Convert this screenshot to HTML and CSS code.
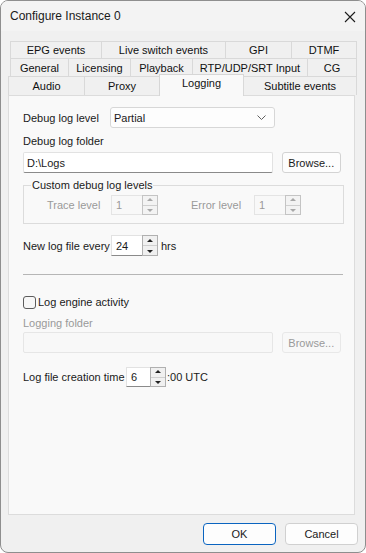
FILE: index.html
```html
<!DOCTYPE html>
<html>
<head>
<meta charset="utf-8">
<link rel="stylesheet" href="styles.css">
</head>
<body>
<div class="window">
  <div class="titlebar">
    <span class="title">Configure Instance 0</span>
    <svg class="close" width="12" height="12" viewBox="0 0 12 12"><path d="M1 1 L11 11 M11 1 L1 11" stroke="#1c1c1c" stroke-width="1.1" fill="none"/></svg>
  </div>
  <div class="tabs">
    <div class="tabrow row1">
      <div class="tab t-epg">EPG events</div>
      <div class="tab t-live">Live switch events</div>
      <div class="tab t-gpi">GPI</div>
      <div class="tab t-dtmf">DTMF</div>
    </div>
    <div class="tabrow row2">
      <div class="tab t-gen">General</div>
      <div class="tab t-lic">Licensing</div>
      <div class="tab t-play">Playback</div>
      <div class="tab t-rtp">RTP/UDP/SRT Input</div>
      <div class="tab t-cg">CG</div>
    </div>
    <div class="tabrow row3">
      <div class="tab t-audio">Audio</div>
      <div class="tab t-proxy">Proxy</div>
      <div class="tab t-log selected">Logging</div>
      <div class="tab t-sub">Subtitle events</div>
    </div>
  </div>
  <div class="panel">
    <div class="row r-level">
      <span class="lbl lbl-level">Debug log level</span>
      <div class="select">
        <span>Partial</span>
        <svg width="9" height="5" viewBox="0 0 9 5"><path d="M0.5 0.5 L4.5 4.5 L8.5 0.5" stroke="#606060" stroke-width="1" fill="none"/></svg>
      </div>
    </div>
    <div class="lbl line l-folder">Debug log folder</div>
    <div class="row r-folder">
      <div class="textbox wide">D:\Logs</div>
      <div class="button">Browse...</div>
    </div>
    <fieldset class="group">
      <legend>Custom debug log levels</legend>
      <div class="grouprow">
        <span class="lbl disabled trace">Trace level</span>
        <div class="spin disabled s-trace"><span class="val">1</span><div class="spinbtns"><div class="sb up"></div><div class="sb down"></div></div></div>
        <span class="lbl disabled errlbl">Error level</span>
        <div class="spin disabled s-err"><span class="val">1</span><div class="spinbtns"><div class="sb up"></div><div class="sb down"></div></div></div>
      </div>
    </fieldset>
    <div class="row r-every">
      <span class="lbl">New log file every</span>
      <div class="spin s-every"><span class="val">24</span><div class="spinbtns"><div class="sb up"></div><div class="sb down"></div></div></div>
      <span class="lbl unit">hrs</span>
    </div>
    <div class="separator"></div>
    <div class="row r-check">
      <span class="checkbox"></span>
      <span class="lbl">Log engine activity</span>
    </div>
    <div class="lbl line disabled l-logging">Logging folder</div>
    <div class="row r-folder2">
      <div class="textbox wide off"></div>
      <div class="button off">Browse...</div>
    </div>
    <div class="row r-time">
      <span class="lbl">Log file creation time</span>
      <div class="spin s-time"><span class="val">6</span><div class="spinbtns"><div class="sb up"></div><div class="sb down"></div></div></div>
      <span class="lbl utc">:00 UTC</span>
    </div>
  </div>
  <div class="footer">
    <div class="dlgbtn ok">OK</div>
    <div class="dlgbtn">Cancel</div>
  </div>
</div>
</body>
</html>
```
FILE: styles.css
```css
* { box-sizing: border-box; }
html, body { margin: 0; padding: 0; background: #ffffff; }
body {
  font-family: "Liberation Sans", Arial, sans-serif;
  font-size: 11px;
  color: #1a1a1a;
}
.window {
  width: 366px;
  height: 553px;
  border: 1px solid #8e8e8e;
  border-radius: 8px;
  background: #f0f0f0;
  display: flex;
  flex-direction: column;
  overflow: hidden;
}
.titlebar {
  height: 30px;
  flex: none;
  background: #f3f3f3;
  display: flex;
  align-items: center;
  justify-content: space-between;
  padding: 0 9px 0 9px;
}
.title { font-size: 12px; color: #1a1a1a; }
.close { margin-top: 1px; }

.tabs {
  padding-top: 10px;
  display: flex;
  flex-direction: column;
  position: relative;
  z-index: 1;
}
.tabrow { display: flex; }
.row1 { margin-left: 9px; height: 17px; }
.row2 { margin-left: 9px; height: 18px; }
.row3 { margin-left: 7px; height: 19px; }
.tab {
  border: 1px solid #d9d9d9;
  border-bottom: none;
  margin-left: -1px;
  background: #f0f0f0;
  display: flex;
  align-items: center;
  justify-content: center;
  white-space: nowrap;
  color: #111;
}
.tabrow .tab:first-child { margin-left: 0; }
.t-epg { width: 92px; }
.t-live { width: 125px; }
.t-gpi { width: 67px; }
.t-dtmf { width: 66px; }
.t-gen { width: 59px; }
.t-lic { width: 63px; }
.t-play { width: 63px; }
.t-rtp { width: 116px; }
.t-cg { width: 50px; }
.t-audio { width: 77px; }
.t-proxy { width: 76px; }
.t-log { width: 85px; }
.t-sub { width: 114px; }
.tab.selected {
  background: #f9f9f9;
  height: 22px;
  margin-top: -2px;
  border-color: #d6d6d6;
  align-items: flex-start;
  padding-top: 2px;
}

.panel {
  margin: 0 10px 0 7px;
  height: 420px;
  flex: none;
  background: #f9f9f9;
  border: 1px solid #dcdcdc;
  padding: 0 13px 0 14px;
  display: flex;
  flex-direction: column;
}
.row { display: flex; align-items: center; }
.lbl { white-space: nowrap; }
.line { height: 14px; line-height: 14px; }
.disabled { color: #9a9a9a; }

.r-level { margin-top: 11px; height: 21px; }
.lbl-level { width: 87px; }
.select {
  width: 165px;
  height: 21px;
  background: #fdfdfd;
  border: 1px solid #d7d7d7;
  border-radius: 3px;
  display: flex;
  align-items: center;
  justify-content: space-between;
  padding: 0 8px 0 3px;
}
.l-folder { margin-top: 6px; }
.r-folder { margin-top: 4px; height: 21px; gap: 9px; }
.textbox {
  height: 21px;
  background: #ffffff;
  border: 1px solid #e2e2e2;
  border-bottom-color: #8a8a8a;
  border-radius: 2px;
  display: flex;
  align-items: center;
  padding-left: 3px;
}
.wide { width: 252px; }
.textbox.off { background: #f8f8f8; border-color: #e6e6e6; }
.button {
  width: 60px;
  height: 21px;
  background: #fdfdfd;
  border: 1px solid #d3d3d3;
  border-radius: 3px;
  display: flex;
  align-items: center;
  justify-content: center;
}
.button.off { color: #9a9a9a; background: #f8f8f8; border-color: #e8e8e8; }

.group {
  margin: 5px -3px 0 0;
  padding: 0 0 8px 0;
  border: 1px solid #dcdcdc;
  border-radius: 0;
  min-width: 0;
}
.group legend {
  margin-left: 7px;
  padding: 0 1px;
  height: 14px;
  line-height: 14px;
  color: #1a1a1a;
}
.grouprow { display: flex; align-items: center; margin-top: 3px; height: 20px; padding-left: 23px; }
.trace { width: 64px; }
.errlbl { margin-left: 33px; width: 63px; }

.spin {
  height: 21px;
  display: flex;
  background: #ffffff;
  border: 1px solid #e2e2e2;
  border-bottom-color: #8a8a8a;
}
.spin .val { flex: 1; display: flex; align-items: center; padding-left: 4px; }
.spinbtns {
  width: 16px;
  display: flex;
  flex-direction: column;
  border: 1px solid #b0b0b0;
  margin: -1px -1px -1px 0;
  background: #f0f0f0;
}
.sb { flex: 1; position: relative; }
.sb.up { border-bottom: 1px solid #cfcfcf; }
.sb::after {
  content: "";
  position: absolute;
  left: 50%;
  top: 50%;
  margin-left: -3px;
  border-left: 3px solid transparent;
  border-right: 3px solid transparent;
}
.sb.up::after { margin-top: -2px; border-bottom: 3px solid #222; }
.sb.down::after { margin-top: -1px; border-top: 3px solid #222; }
.spin.disabled { background: #f8f8f8; border-color: #e4e4e4; height: 20px; }
.spin.disabled .val { color: #9a9a9a; }
.spin.disabled .spinbtns { border-color: #c4c4c4; background: #f3f3f3; }
.spin.disabled .sb.up::after { border-bottom-color: #a8a8a8; }
.spin.disabled .sb.down::after { border-top-color: #a8a8a8; }
.s-trace, .s-err, .s-every { width: 47px; }
.s-time { width: 40px; height: 20px; }

.r-every { margin-top: 11px; height: 21px; }
.r-every .lbl:first-child { width: 88px; }
.unit { margin-left: 3px; }
.separator { margin-top: 18px; height: 1px; background: #b6b6b6; width: 320px; }
.r-check { margin-top: 20px; height: 14px; }
.checkbox {
  width: 13px;
  height: 13px;
  border: 1px solid #5c5c5c;
  border-radius: 3px;
  background: #f7f7f7;
  margin-right: 2px;
}
.l-logging { margin-top: 7px; }
.r-folder2 { margin-top: 2px; height: 21px; gap: 9px; }
.r-time { margin-top: 14px; height: 20px; }
.r-time .lbl:first-child { width: 103px; }
.utc { margin-left: 1px; }

.footer {
  display: flex;
  justify-content: flex-end;
  gap: 9px;
  padding: 8px 7px 0 0;
}
.dlgbtn {
  width: 73px;
  height: 22px;
  background: #fdfdfd;
  border: 1px solid #d0d0d0;
  border-radius: 4px;
  display: flex;
  align-items: center;
  justify-content: center;
}
.dlgbtn.ok { border-color: #0a64c0; }
```
